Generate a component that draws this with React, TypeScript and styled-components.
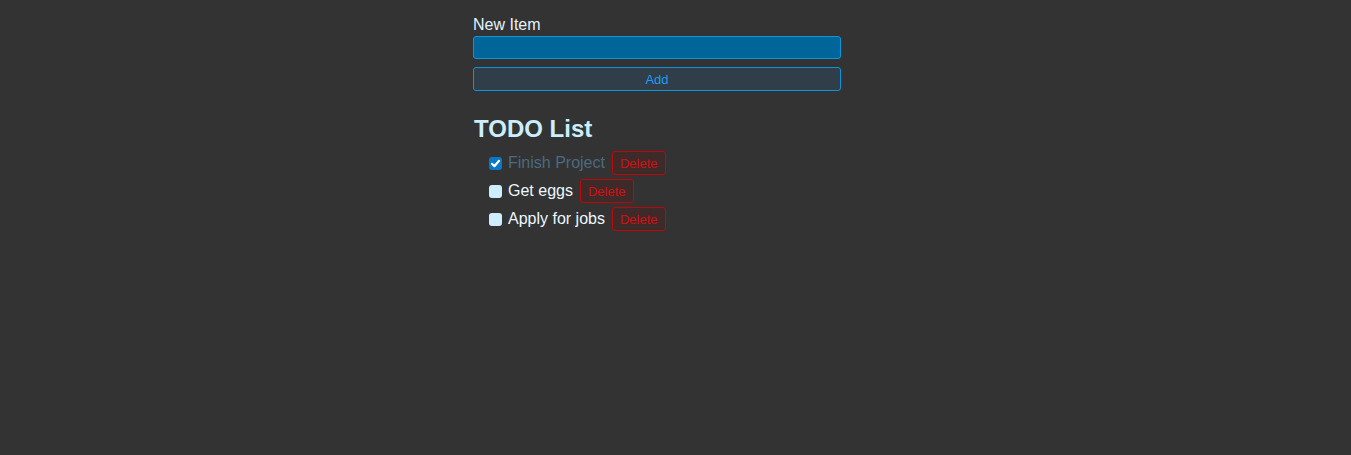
import React, { useState } from "react";
import styled, { createGlobalStyle } from "styled-components";

const Global = createGlobalStyle`
  html, body { margin: 0; padding: 0; background: #333333; }
  body { font-family: "Liberation Sans", Arial, sans-serif; }
`;

const Page = styled.div`
  min-height: 455px;
  padding: 16px 0 0 473px;
  box-sizing: border-box;
`;

const Form = styled.div`
  width: 368px;
  display: flex;
  flex-direction: column;
`;

const Label = styled.label`
  font-size: 16px;
  color: #e4f2ff;
  line-height: 18px;
`;

const Input = styled.input`
  margin-top: 2px;
  height: 23px;
  box-sizing: border-box;
  background: #006699;
  border: 1px solid #0a96dc;
  border-radius: 3px;
  outline: none;
  color: #fff;
  font-family: inherit;
  font-size: 14px;
  padding: 0 6px;
`;

const AddButton = styled.button`
  margin-top: 8px;
  height: 24px;
  box-sizing: border-box;
  background: #2f3e48;
  border: 1px solid #0a96dc;
  border-radius: 3px;
  color: #1e9cf0;
  font-family: inherit;
  font-size: 13px;
  cursor: pointer;
`;

const Heading = styled.h2`
  margin: 24px 0 0 1px;
  font-size: 24px;
  font-weight: bold;
  color: #cceeff;
  line-height: 28px;
`;

const List = styled.ul`
  list-style: none;
  margin: 8px 0 0;
  padding: 0 0 0 16px;
  display: flex;
  flex-direction: column;
  gap: 4px;
`;

const Row = styled.li`
  display: flex;
  align-items: center;
  height: 24px;
`;

const Check = styled.input`
  appearance: none;
  margin: 0 5px 0 0;
  width: 13px;
  height: 13px;
  border-radius: 3px;
  background: #cceeff;
  cursor: pointer;
  &:checked {
    background: #0a78c8 url("data:image/svg+xml;utf8,<svg xmlns='http://www.w3.org/2000/svg' viewBox='0 0 13 13'><path d='M3 6.8 L5.4 9.2 L10 3.8' fill='none' stroke='white' stroke-width='2.2' stroke-linecap='round' stroke-linejoin='round'/></svg>") center/13px 13px no-repeat;
  }
`;

const ItemText = styled.span<{ $done: boolean }>`
  font-size: 16px;
  color: ${(p) => (p.$done ? "#4b6a80" : "#eef7ff")};
  margin-left: 1px;
`;

const DeleteButton = styled.button`
  margin-left: 7px;
  height: 24px;
  box-sizing: border-box;
  padding: 0 7px;
  background: #3f2a2a;
  border: 1px solid #b80a0a;
  border-radius: 3px;
  color: #d01010;
  font-family: inherit;
  font-size: 13px;
  cursor: pointer;
`;

type Item = { id: number; text: string; done: boolean };

export default function App() {
  const [items, setItems] = useState<Item[]>([
    { id: 1, text: "Finish Project", done: true },
    { id: 2, text: "Get eggs", done: false },
    { id: 3, text: "Apply for jobs", done: false },
  ]);
  const [value, setValue] = useState("");

  const add = () => {
    if (!value.trim()) return;
    setItems((s) => [...s, { id: Date.now(), text: value.trim(), done: false }]);
    setValue("");
  };

  return (
    <Page>
      <Global />
      <Form>
        <Label htmlFor="new-item">New Item</Label>
        <Input id="new-item" value={value} onChange={(e) => setValue(e.target.value)} />
        <AddButton onClick={add}>Add</AddButton>
      </Form>
      <Heading>TODO List</Heading>
      <List>
        {items.map((it) => (
          <Row key={it.id}>
            <Check
              type="checkbox"
              checked={it.done}
              onChange={() =>
                setItems((s) => s.map((x) => (x.id === it.id ? { ...x, done: !x.done } : x)))
              }
            />
            <ItemText $done={it.done}>{it.text}</ItemText>
            <DeleteButton onClick={() => setItems((s) => s.filter((x) => x.id !== it.id))}>
              Delete
            </DeleteButton>
          </Row>
        ))}
      </List>
    </Page>
  );
}
